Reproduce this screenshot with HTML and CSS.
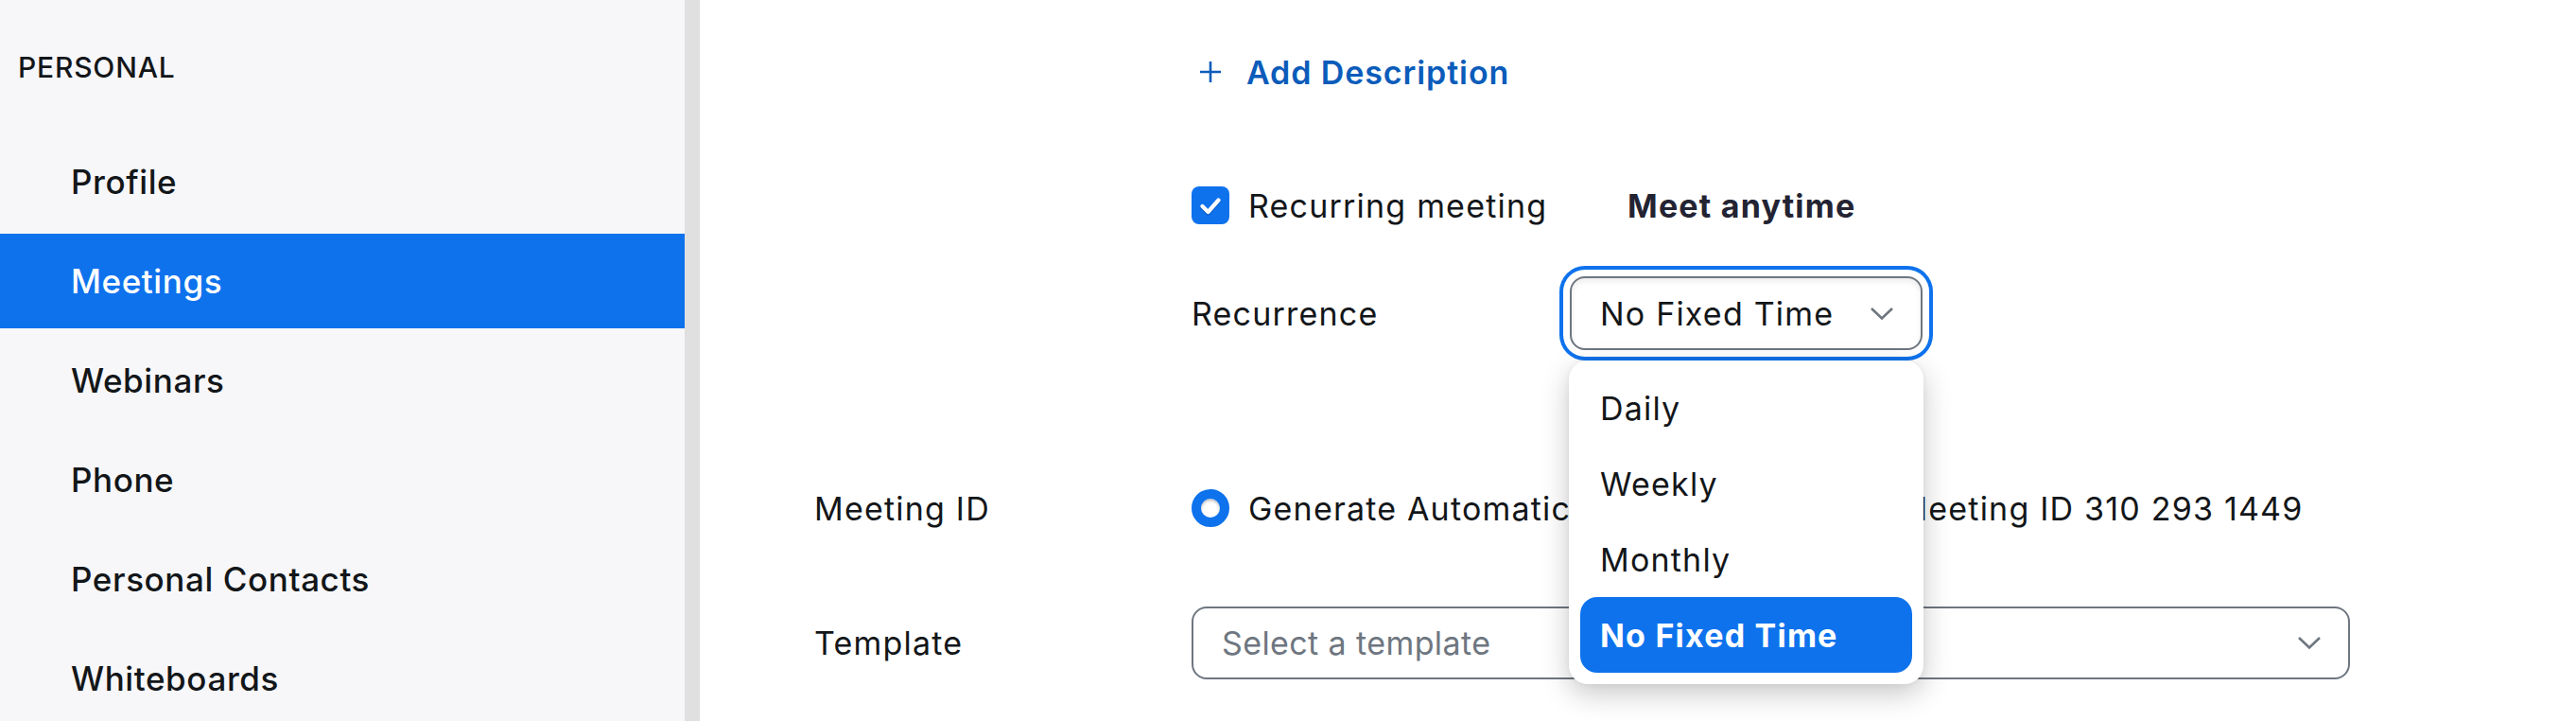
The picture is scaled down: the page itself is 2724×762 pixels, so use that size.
FILE: index.html
```html
<!DOCTYPE html>
<html lang="en">
<head>
    <meta charset="UTF-8">
    <title>Schedule Meeting</title>
    <link rel="stylesheet" href="styles.css">
</head>
<body>
<div class="page">
    <aside class="sidebar">
        <div class="section-title">PERSONAL</div>
        <ul class="nav">
            <li class="nav-item">Profile</li>
            <li class="nav-item active">Meetings</li>
            <li class="nav-item">Webinars</li>
            <li class="nav-item">Phone</li>
            <li class="nav-item">Personal Contacts</li>
            <li class="nav-item">Whiteboards</li>
        </ul>
    </aside>
    <div class="divider"></div>

    <main class="content">
        <div class="row row-desc">
            <div class="label"></div>
            <a class="add-link">
                <svg class="plus" width="24" height="24" viewBox="0 0 24 24">
                    <path d="M12 1v22M1 12h22" stroke="#0b5cba" stroke-width="2.6" fill="none"/>
                </svg>
                Add Description
            </a>
        </div>

        <div class="row row-recurring">
            <div class="label"></div>
            <label class="check">
                <svg width="40" height="40" viewBox="0 0 40 40">
                    <rect width="40" height="40" rx="8" fill="#0e72ed"/>
                    <path d="M11.5 21l6 6 11-12.5" stroke="#0a3f8a" stroke-opacity="0.35" stroke-width="5" fill="none" stroke-linecap="round" stroke-linejoin="round" transform="translate(0 1.2)"/>
                    <path d="M11.5 21l6 6 11-12.5" stroke="#fff" stroke-width="4.2" fill="none" stroke-linecap="round" stroke-linejoin="round"/>
                </svg>
                <span>Recurring meeting</span>
            </label>
            <span class="meet-anytime">Meet anytime</span>
        </div>

        <div class="row row-recurrence">
            <div class="label"></div>
            <span class="sub-label">Recurrence</span>
            <div class="select-wrap">
                <div class="select focused">
                    <span>No Fixed Time</span>
                    <svg class="chevron" width="26" height="15" viewBox="0 0 26 15">
                        <path d="M2 2l11 10.5L24 2" stroke="#6e7680" stroke-width="2.6" fill="none"/>
                    </svg>
                </div>
                <ul class="dropdown">
                    <li>Daily</li>
                    <li>Weekly</li>
                    <li>Monthly</li>
                    <li class="selected">No Fixed Time</li>
                </ul>
            </div>
        </div>

        <div class="row row-id">
            <div class="label">Meeting ID</div>
            <label class="radio">
                <span class="radio-dot"></span>
                <span>Generate Automatically</span>
            </label>
            <label class="radio radio-second">
                <span class="radio-dot off"></span>
                <span>Personal Meeting ID 310 293 1449</span>
            </label>
        </div>

        <div class="row row-template">
            <div class="label">Template</div>
            <div class="select template">
                <span class="placeholder">Select a template</span>
                <svg class="chevron" width="26" height="15" viewBox="0 0 26 15">
                    <path d="M2 2l11 10.5L24 2" stroke="#6e7680" stroke-width="2.6" fill="none"/>
                </svg>
            </div>
        </div>
    </main>
</div>
</body>
</html>
```

FILE: styles.css
```css
body {
    margin: 0;
    font-family: Inter, "Liberation Sans", Arial, sans-serif;
    color: #131619;
    background-color: #ffffff;
}
.page {
    display: flex;
    height: 762px;
    overflow: hidden;
}
.sidebar {
    width: 724px;
    flex-shrink: 0;
    background-color: #f7f7f9;
}
.divider {
    width: 16px;
    flex-shrink: 0;
    background-color: #e0e0e0;
}
.section-title {
    font-size: 30px;
    font-weight: 500;
    line-height: 40px;
    padding: 51px 0 0 19px;
    letter-spacing: 0.8px;
}
.nav {
    list-style: none;
    margin: 51px 0 0 0;
    padding: 0;
}
.nav-item {
    height: 100px;
    margin-bottom: 5px;
    padding-left: 75px;
    display: flex;
    align-items: center;
    font-size: 35px;
    font-weight: 500;
    letter-spacing: 0.6px;
}
.nav-item.active {
    background-color: #0e72ed;
    color: #ffffff;
}

.content {
    flex: 1;
    padding: 36px 0 0 121px;
    font-size: 34px;
    letter-spacing: 1.2px;
}
.row {
    display: flex;
    align-items: center;
}
.label {
    width: 399px;
    flex-shrink: 0;
}
.row-desc {
    height: 80px;
}
.row-recurring {
    height: 80px;
    margin-top: 61px;
}
.row-recurrence {
    height: 78px;
    margin-top: 35px;
}
.row-id {
    height: 80px;
    margin-top: 127px;
}
.row-template {
    height: 77px;
    margin-top: 64px;
}

.add-link {
    display: flex;
    align-items: center;
    color: #0b5cba;
    font-weight: 600;
    font-size: 34px;
    letter-spacing: 0.9px;
    cursor: pointer;
}
.plus {
    margin: 0 26px 0 8px;
}
.check {
    display: flex;
    align-items: center;
    gap: 20px;
    width: 461px;
}
.check svg {
    flex-shrink: 0;
}
.meet-anytime {
    font-weight: 700;
    color: #232333;
}

.sub-label {
    width: 400px;
    flex-shrink: 0;
}
.select-wrap {
    position: relative;
}
.select {
    box-sizing: border-box;
    height: 78px;
    border: 2px solid #6e7680;
    border-radius: 16px;
    display: flex;
    align-items: center;
    justify-content: space-between;
    padding: 0 28px 0 30px;
    background-color: #ffffff;
}
.select.focused {
    width: 373px;
    box-shadow: 0 0 0 7px #ffffff, 0 0 0 11px #0e72ed, 0 3px 6px rgba(0, 0, 0, 0.08) inset;
}
.select.template {
    width: 1225px;
    height: 77px;
}
.placeholder {
    color: #6e7680;
    letter-spacing: 0.4px;
}
.chevron {
    flex-shrink: 0;
}

.dropdown {
    position: absolute;
    top: 89px;
    left: -1px;
    width: 375px;
    box-sizing: border-box;
    margin: 0;
    padding: 10px 12px 12px 12px;
    list-style: none;
    background-color: #ffffff;
    border-radius: 20px;
    box-shadow: 0 10px 30px rgba(0, 0, 0, 0.22), 0 0 6px rgba(0, 0, 0, 0.06);
    z-index: 5;
}
.dropdown li {
    height: 80px;
    display: flex;
    align-items: center;
    padding-left: 21px;
    border-radius: 18px;
}
.dropdown li.selected {
    background-color: #0e72ed;
    color: #ffffff;
    font-weight: 700;
}

.radio {
    display: flex;
    align-items: center;
    gap: 20px;
}
.radio-dot {
    box-sizing: border-box;
    flex-shrink: 0;
    width: 40px;
    height: 40px;
    border-radius: 50%;
    border: 10px solid #0e72ed;
    background-color: #ffffff;
    box-shadow: 0 2px 3px rgba(0, 0, 0, 0.25) inset;
}
.radio-dot.off {
    border: 2px solid #6e7680;
    box-shadow: none;
}
.radio-second {
    margin-left: 66px;
}
```
